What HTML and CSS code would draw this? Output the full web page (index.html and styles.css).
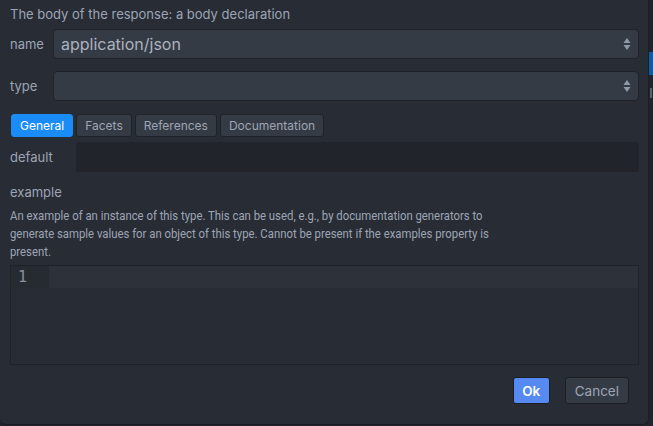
FILE: index.html
```html
<!DOCTYPE html>
<html>
<head>
<meta charset="utf-8">
<link rel="stylesheet" href="styles.css">
</head>
<body>
<div class="page">
  <div class="dialog">
    <div class="title">The body of the response: a body declaration</div>
    <div class="row">
      <label class="label">name</label>
      <div class="select">
        <span class="select-value">application/json</span>
        <svg class="arrows" width="8" height="14" viewBox="0 0 8 14"><path d="M4 1 L7.5 6 H0.5 Z M4 13 L7.5 8 H0.5 Z" fill="#9099a8"/></svg>
      </div>
    </div>
    <div class="row row-type">
      <label class="label">type</label>
      <div class="select">
        <span class="select-value"></span>
        <svg class="arrows" width="8" height="14" viewBox="0 0 8 14"><path d="M4 1 L7.5 6 H0.5 Z M4 13 L7.5 8 H0.5 Z" fill="#9099a8"/></svg>
      </div>
    </div>
    <div class="tabs">
      <div class="tab active">General</div>
      <div class="tab">Facets</div>
      <div class="tab">References</div>
      <div class="tab">Documentation</div>
    </div>
    <div class="row row-default">
      <label class="label label-wide">default</label>
      <div class="input"></div>
    </div>
    <div class="field-title">example</div>
    <div class="desc">An example of an instance of this type. This can be used, e.g., by documentation generators to generate sample values for an object of this type. Cannot be present if the examples property is present.</div>
    <div class="editor">
      <div class="line">
        <div class="gutter">1</div>
        <div class="code"></div>
      </div>
    </div>
    <div class="buttons">
      <button class="btn btn-primary">Ok</button>
      <button class="btn">Cancel</button>
    </div>
  </div>
  <div class="side">
    <div class="side-blue"></div>
    <div class="side-mark"></div>
  </div>
</div>
</body>
</html>
```
FILE: styles.css
```css
html, body {
  margin: 0;
  padding: 0;
  background: #21252b;
}
body {
  font-family: Inter, "Noto Sans", sans-serif;
  color: #9da5b4;
  font-size: 13px;
}
.page {
  display: flex;
  width: 653px;
  height: 426px;
}
.dialog {
  width: 649px;
  height: 425px;
  box-sizing: border-box;
  padding: 5px 9px 0 10px;
  background: #282c34;
  border-right: 1px solid #1b1e23;
  border-bottom: 1px solid #1b1e23;
  border-radius: 0 0 6px 6px;
  display: flex;
  flex-direction: column;
}
.title {
  line-height: 18px;
  height: 18px;
  color: #9da5b4;
}
.row {
  display: flex;
  align-items: center;
  margin-top: 6px;
}
.row-type {
  margin-top: 12px;
}
.label {
  width: 43px;
  flex: none;
  color: #9da5b4;
}
.label-wide {
  width: 66px;
}
.select {
  flex: 1;
  height: 30px;
  box-sizing: border-box;
  background: #353b45;
  border: 1px solid #1f2228;
  border-radius: 4px;
  display: flex;
  align-items: center;
  padding: 0 7px 0 7px;
}
.select-value {
  flex: 1;
  font-size: 16px;
  color: #abb2bf;
}
.arrows {
  display: block;
}
.tabs {
  display: flex;
  gap: 3px;
  margin-top: 13px;
  margin-left: 1px;
}
.tab {
  height: 23px;
  box-sizing: border-box;
  padding: 0 8px;
  line-height: 21px;
  font-size: 12px;
  background: #353b45;
  border: 1px solid #1f2228;
  border-radius: 3px;
  color: #9da5b4;
}
.tab.active {
  background: #1a8cf6;
  border-color: #1a8cf6;
  color: #ffffff;
}
.row-default {
  margin-top: 5px;
}
.input {
  flex: 1;
  height: 30px;
  background: #21242a;
  border-radius: 3px;
}
.field-title {
  margin-top: 11px;
  line-height: 18px;
}
.desc {
  margin-top: 5px;
  width: 600px;
  line-height: 18px;
  font-family: Roboto, sans-serif;
  font-size: 13.5px;
  color: #9da5b4;
  transform: scaleX(0.84);
  transform-origin: left top;
}
.editor {
  margin-top: 5px;
  height: 100px;
  box-sizing: border-box;
  border: 1px solid #1f2228;
  background: #282c34;
}
.line {
  display: flex;
  height: 22px;
}
.gutter {
  width: 38px;
  flex: none;
  background: #262a31;
  font-family: "DejaVu Sans Mono", monospace;
  font-size: 15px;
  line-height: 22px;
  color: #8a919e;
  box-sizing: border-box;
  padding-left: 7px;
}
.code {
  flex: 1;
  background: #2c313a;
}
.buttons {
  display: flex;
  justify-content: flex-end;
  gap: 15px;
  margin-top: 12px;
  padding-right: 10px;
}
.btn {
  height: 27px;
  box-sizing: border-box;
  border: 1px solid #1b1e23;
  border-radius: 3px;
  background: #353b45;
  color: #9da5b4;
  font-family: Inter, "Noto Sans", sans-serif;
  font-size: 13.5px;
  padding: 0 9px;
}
.btn-primary {
  background: #568af2;
  color: #ffffff;
  font-weight: 600;
  padding: 0 8px;
  width: 37px;
}
.side {
  flex: 1;
  position: relative;
}
.side-blue {
  margin-top: 52px;
  height: 23px;
  background: #0e5ba6;
}
.side-mark {
  margin-top: 13px;
  margin-left: 1px;
  width: 2px;
  height: 10px;
  background: #5c6370;
}
```
